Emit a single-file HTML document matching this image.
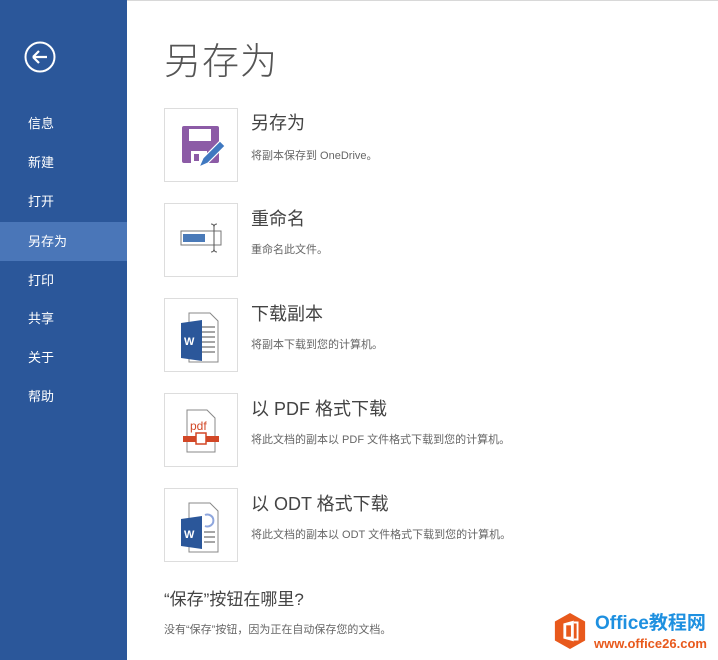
<!DOCTYPE html>
<html><head><meta charset="utf-8"><style>
*{margin:0;padding:0;box-sizing:border-box}
body{width:718px;height:660px;overflow:hidden;background:#fff;font-family:"Liberation Sans","Noto Sans CJK SC",sans-serif;position:relative}
#side{position:absolute;left:0;top:0;width:127px;height:660px;background:#2b579a}
.nav{position:absolute;left:0;width:127px;height:39px;line-height:39px;padding-left:28px;color:#fff;font-size:13px}
.sel{background:#4a76b8}
#main{position:absolute;left:127px;top:0;right:0;height:660px;border-top:1px solid #d8d8d8}
h1{position:absolute;left:37px;top:30px;font-size:37px;font-weight:300;color:#555;letter-spacing:1px}
.box{position:absolute;left:37px;width:74px;height:74px;border:1px solid #ddd;background:#fff}
.t{position:absolute;left:124px;font-size:18px;color:#444}
.d{position:absolute;left:124px;font-size:11px;color:#666}
</style></head><body>
<div id="side">
<svg style="position:absolute;left:24px;top:41px" width="32" height="32" viewBox="0 0 32 32"><circle cx="16" cy="16" r="14.5" fill="none" stroke="#fff" stroke-width="2"/><path d="M9 16H23M9 16L15 10M9 16L15 22" stroke="#fff" stroke-width="2.2" fill="none"/></svg>
<div class="nav" style="top:104px">信息</div>
<div class="nav" style="top:143px">新建</div>
<div class="nav" style="top:182px">打开</div>
<div class="nav sel" style="top:222px">另存为</div>
<div class="nav" style="top:261px">打印</div>
<div class="nav" style="top:299px">共享</div>
<div class="nav" style="top:338px">关于</div>
<div class="nav" style="top:377px">帮助</div>
</div>
<div id="main">
<h1>另存为</h1>
<div class="box" style="top:107px"><svg width="74" height="74"><rect x="17" y="17" width="37" height="37" rx="2" fill="#8c5ba6"/><rect x="24" y="20" width="22" height="12" fill="#fff"/><rect x="26" y="42" width="16" height="12" fill="#fff"/><rect x="29" y="45" width="5" height="7" fill="#8c5ba6"/><path d="M34 58L38 49L55 32L60 37L43 54Z" fill="#3f78c0" stroke="#fff" stroke-width="1.2"/></svg></div>
<div class="t" style="top:108px">另存为</div><div class="d" style="top:146px">将副本保存到 OneDrive。</div>
<div class="box" style="top:202px"><svg width="74" height="74"><rect x="16" y="27" width="40" height="14" fill="#fff" stroke="#777"/><rect x="18" y="30" width="22" height="8" fill="#4a7ab8"/><path d="M46 20Q49 20 49 23V45Q49 48 46 48M52 20Q49 20 49 23M52 48Q49 48 49 45" stroke="#555" fill="none"/></svg></div>
<div class="t" style="top:204px">重命名</div><div class="d" style="top:240px">重命名此文件。</div>
<div class="box" style="top:297px"><svg width="74" height="74"><path d="M24 14H45L53 22V63H24Z" fill="#fff" stroke="#888"/><path d="M33 28H50M33 33H50M33 38H50M33 43H50M33 48H50M33 53H50" stroke="#888" stroke-width="1.5"/><path d="M16 24L37 21V62L16 59Z" fill="#2b579a"/><text x="19" y="46" font-size="11" font-weight="bold" fill="#fff" font-family="Liberation Sans">W</text></svg></div>
<div class="t" style="top:299px">下载副本</div><div class="d" style="top:335px">将副本下载到您的计算机。</div>
<div class="box" style="top:392px"><svg width="74" height="74"><path d="M22 16H42L50 24V58H22Z" fill="#fff" stroke="#888"/><text x="25" y="36" font-size="12" fill="#d24726" font-family="Liberation Sans">pdf</text><rect x="18" y="42" width="36" height="6" fill="#d24726"/><rect x="31" y="39" width="10" height="11" fill="#fff" stroke="#d24726" stroke-width="1.5"/></svg></div>
<div class="t" style="top:394px">以 PDF 格式下载</div><div class="d" style="top:430px">将此文档的副本以 PDF 文件格式下载到您的计算机。</div>
<div class="box" style="top:487px"><svg width="74" height="74"><path d="M24 14H45L53 22V63H24Z" fill="#fff" stroke="#888"/><path d="M39 43H50M39 48H50M39 53H50" stroke="#888" stroke-width="1.5"/><path d="M40 26A6 6 0 1 1 40 37" stroke="#8ea6dd" stroke-width="2" fill="none"/><path d="M16 30L37 27V60L16 57Z" fill="#2b579a"/><text x="19" y="49" font-size="11" font-weight="bold" fill="#fff" font-family="Liberation Sans">W</text></svg></div>
<div class="t" style="top:489px">以 ODT 格式下载</div><div class="d" style="top:525px">将此文档的副本以 ODT 文件格式下载到您的计算机。</div>
<div style="position:absolute;left:37px;top:584px;font-size:17px;color:#444">“保存”按钮在哪里?</div>
<div style="position:absolute;left:37px;top:620px;font-size:11px;color:#666">没有“保存”按钮，因为正在自动保存您的文档。</div>
<svg style="position:absolute;left:426px;top:611px" width="34" height="38" viewBox="0 0 36 40"><path d="M18 1L34 10V30L18 39L2 30V10Z" fill="#e8591c"/><path d="M11 12L22 9V31L11 28Z" fill="#fff"/><rect x="14" y="14" width="5" height="12" fill="#e8591c"/><path d="M22 11H26V29H22" stroke="#fff" stroke-width="2" fill="none"/></svg>
<div style="position:absolute;left:468px;top:612px;font-size:19px;font-weight:bold;color:#1e90e0;line-height:22px">Office教程网</div>
<div style="position:absolute;left:467px;top:635px;font-size:13px;font-weight:bold;color:#e8591c">www.office26.com</div>
</div>
</body></html>
